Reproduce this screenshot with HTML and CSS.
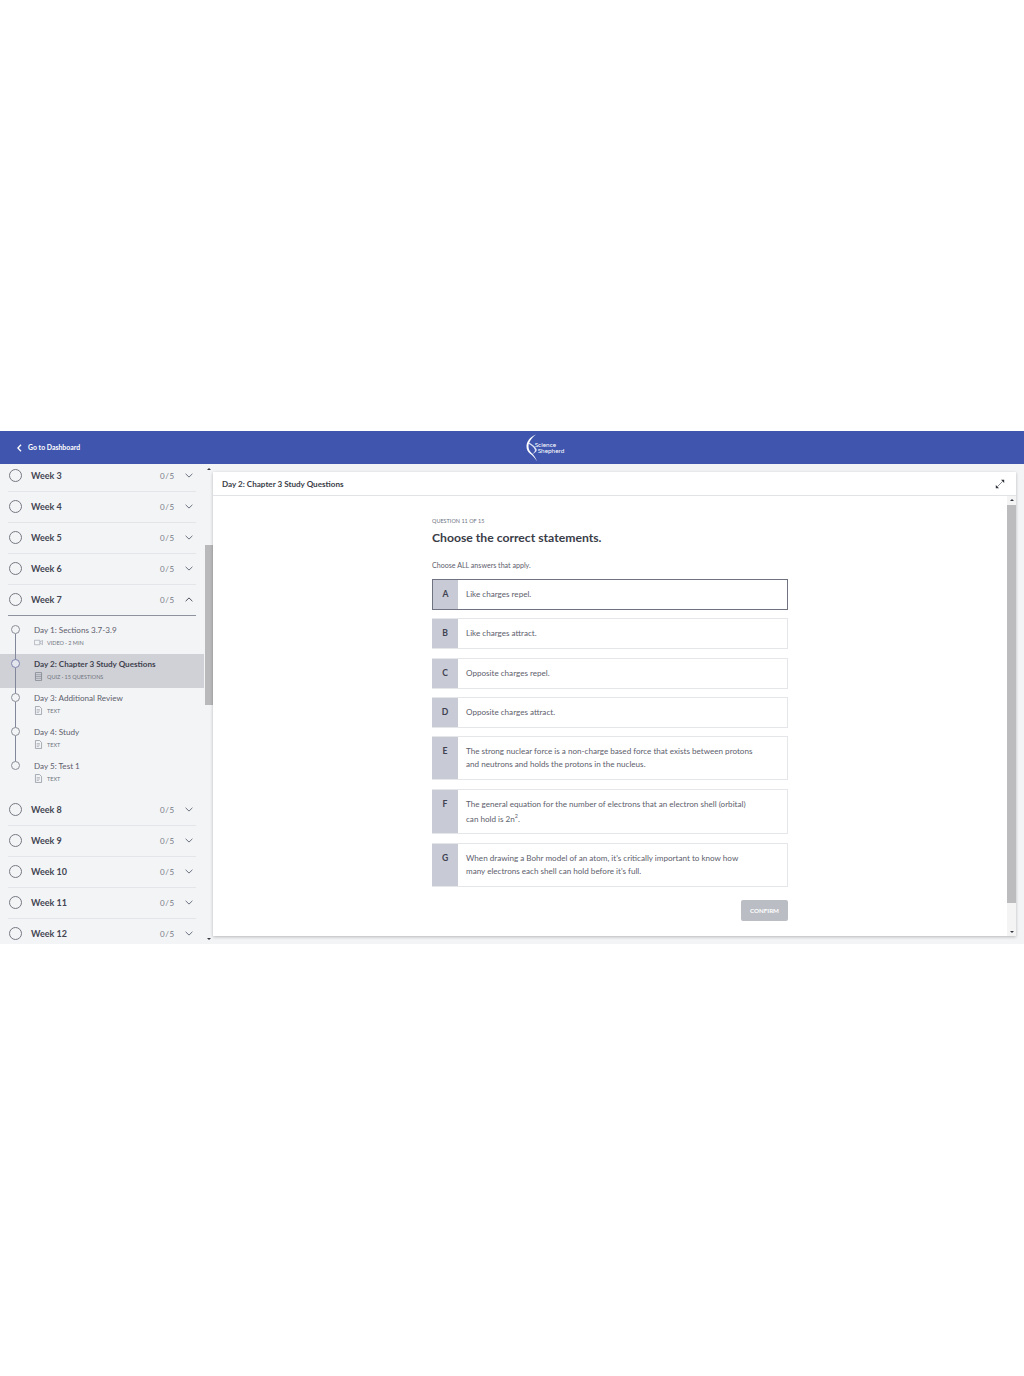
FILE: index.html
```html
<!DOCTYPE html>
<html lang="en">
<head>
  <meta charset="UTF-8">
  <meta name="viewport" content="width=device-width, initial-scale=1.0">
  <title>Day 2: Chapter 3 Study Questions</title>
  <link rel="stylesheet" href="styles.css">
</head>
<body>
  <svg class="icon-defs" width="0" height="0">
    <symbol id="chevron-down" viewBox="0 0 8 5"><path d="M.6.8 4 4.100 7.400.8" fill="none" stroke="#6b7080" stroke-width="1"/></symbol>
    <symbol id="chevron-up" viewBox="0 0 8 5"><path d="M.6 4.200 4 .9l3.400 3.300" fill="none" stroke="#4a4e5c" stroke-width="1"/></symbol>
    <symbol id="doc" viewBox="0 0 8 10"><path d="M.6.6h4.600l2.200 2.200v6.600H.6z" fill="none" stroke="#8b8f9c" stroke-width=".8"/><path d="M2 4h3.600M2 5.600h3.600M2 7.200h2.400" stroke="#8b8f9c" stroke-width=".6"/></symbol>
    <symbol id="quiz" viewBox="0 0 8 10"><path d="M.6.6h6.800v8.800H.6z" fill="none" stroke="#7b7f8c" stroke-width=".8"/><path d="M.6 3h6.800M.6 5h6.800M.6 7h6.800" stroke="#7b7f8c" stroke-width=".6"/></symbol>
    <symbol id="video" viewBox="0 0 10 7"><path d="M.5 1h6v5h-6zM6.500 3 9.500 1.200v4.600L6.500 4" fill="none" stroke="#a3a7b2" stroke-width=".8"/></symbol>
  </svg>

  <div class="app">
    <header class="topbar">
      <a class="back-link" href="#">
        <svg class="back-icon" viewBox="0 0 5 8"><path d="M4 .8.9 4 4 7.200" fill="none" stroke="#fff" stroke-width="1.300"/></svg>
        Go to Dashboard
      </a>
      <div class="logo">
        <svg class="logo-mark" viewBox="0 0 12 28">
          <path d="M10 .5C4 3 .5 7.500.5 12.500c0 3 1.500 5.500 4 7.500 2 1.600 4.500 4 6.500 7.500-1.200-4-3.500-6.500-5.500-8.500-2-2-3-4-3-6.500C2.500 8 5.500 4 10 .5z" fill="#fff"/>
          <path d="M3 8.500c2.500 1.500 6 3.500 7.500 6.500.8 1.800-.5 3.500-5 5.500 2.500-2 4-3.200 3.300-5-.9-2.300-3.800-4.500-5.800-5.500z" fill="#dfe3f4"/>
        </svg>
        <div class="logo-text">
          <span>Science</span>
          <span class="logo-indent">Shepherd</span>
        </div>
      </div>
    </header>

    <div class="columns">
      <aside class="sidebar">
        <div class="week-list">
          <div class="week"><span class="week-ring"></span><span class="week-name">Week 3</span><span class="week-count">0/5</span><svg class="week-chevron"><use href="#chevron-down"/></svg></div>
          <div class="week"><span class="week-ring"></span><span class="week-name">Week 4</span><span class="week-count">0/5</span><svg class="week-chevron"><use href="#chevron-down"/></svg></div>
          <div class="week"><span class="week-ring"></span><span class="week-name">Week 5</span><span class="week-count">0/5</span><svg class="week-chevron"><use href="#chevron-down"/></svg></div>
          <div class="week"><span class="week-ring"></span><span class="week-name">Week 6</span><span class="week-count">0/5</span><svg class="week-chevron"><use href="#chevron-down"/></svg></div>
          <div class="week open"><span class="week-ring"></span><span class="week-name">Week 7</span><span class="week-count">0/5</span><svg class="week-chevron"><use href="#chevron-up"/></svg></div>

          <div class="days">
            <div class="day">
              <span class="day-dot"></span>
              <div class="day-title">Day 1: Sections 3.7-3.9</div>
              <div class="day-meta"><svg class="meta-icon"><use href="#video"/></svg>Video · 2 min</div>
            </div>
            <div class="day active">
              <span class="day-dot"></span>
              <div class="day-title">Day 2: Chapter 3 Study Questions</div>
              <div class="day-meta"><svg class="meta-icon"><use href="#quiz"/></svg>Quiz · 15 questions</div>
            </div>
            <div class="day">
              <span class="day-dot"></span>
              <div class="day-title">Day 3: Additional Review</div>
              <div class="day-meta"><svg class="meta-icon"><use href="#doc"/></svg>Text</div>
            </div>
            <div class="day">
              <span class="day-dot"></span>
              <div class="day-title">Day 4: Study</div>
              <div class="day-meta"><svg class="meta-icon"><use href="#doc"/></svg>Text</div>
            </div>
            <div class="day last">
              <span class="day-dot"></span>
              <div class="day-title">Day 5: Test 1</div>
              <div class="day-meta"><svg class="meta-icon"><use href="#doc"/></svg>Text</div>
            </div>
          </div>

          <div class="week"><span class="week-ring"></span><span class="week-name">Week 8</span><span class="week-count">0/5</span><svg class="week-chevron"><use href="#chevron-down"/></svg></div>
          <div class="week"><span class="week-ring"></span><span class="week-name">Week 9</span><span class="week-count">0/5</span><svg class="week-chevron"><use href="#chevron-down"/></svg></div>
          <div class="week"><span class="week-ring"></span><span class="week-name">Week 10</span><span class="week-count">0/5</span><svg class="week-chevron"><use href="#chevron-down"/></svg></div>
          <div class="week"><span class="week-ring"></span><span class="week-name">Week 11</span><span class="week-count">0/5</span><svg class="week-chevron"><use href="#chevron-down"/></svg></div>
          <div class="week"><span class="week-ring"></span><span class="week-name">Week 12</span><span class="week-count">0/5</span><svg class="week-chevron"><use href="#chevron-down"/></svg></div>
        </div>
        <div class="scrollbar side-scroll">
          <span class="arrow-up"></span>
          <span class="thumb"></span>
          <span class="arrow-down"></span>
        </div>
      </aside>

      <main class="main">
        <div class="card">
          <div class="card-head">
            <span class="card-title">Day 2: Chapter 3 Study Questions</span>
            <svg class="expand-icon" viewBox="0 0 10 10">
              <path d="M2.500 7.500 7.500 2.500" stroke="#6b6e78" stroke-width=".8"/>
              <path d="M6 .8h3.200V4zM.8 6v3.200H4z" fill="#2f323a"/>
            </svg>
          </div>
          <div class="card-body">
            <div class="quiz-wrap">
              <section class="quiz">
                <p class="question-no">Question 11 of 15</p>
                <h1 class="question">Choose the correct statements.</h1>
                <p class="hint">Choose ALL answers that apply.</p>

                <div class="answer selected"><span class="letter">A</span><span class="answer-text">Like charges repel.</span></div>
                <div class="answer"><span class="letter">B</span><span class="answer-text">Like charges attract.</span></div>
                <div class="answer"><span class="letter">C</span><span class="answer-text">Opposite charges repel.</span></div>
                <div class="answer"><span class="letter">D</span><span class="answer-text">Opposite charges attract.</span></div>
                <div class="answer tall"><span class="letter">E</span><span class="answer-text">The strong nuclear force is a non-charge based force that exists between protons<br>and neutrons and holds the protons in the nucleus.</span></div>
                <div class="answer tall with-sup"><span class="letter">F</span><span class="answer-text">The general equation for the number of electrons that an electron shell (orbital)<br>can hold is 2n<sup>2</sup>.</span></div>
                <div class="answer tall"><span class="letter">G</span><span class="answer-text">When drawing a Bohr model of an atom, it's critically important to know how<br>many electrons each shell can hold before it's full.</span></div>

                <div class="actions"><button class="confirm" disabled>Confirm</button></div>
              </section>
            </div>
            <div class="scrollbar body-scroll">
              <span class="arrow-up"></span>
              <span class="thumb"></span>
              <span class="arrow-down"></span>
            </div>
          </div>
        </div>
      </main>
    </div>
  </div>
</body>
</html>
```

FILE: styles.css
```css
* {
  margin: 0;
  padding: 0;
  box-sizing: border-box;
}

body {
  font-family: Lato, 'Noto Sans', sans-serif;
  background: #ffffff;
  color: #3a3d48;
}

.icon-defs {
  display: block;
  height: 0;
}

.app {
  margin-top: 431px;
  height: 513px;
  display: flex;
  flex-direction: column;
  background: #f3f4f6;
}

/* top bar */
.topbar {
  height: 33px;
  flex: none;
  background: #4056ae;
  position: relative;
  display: flex;
  align-items: center;
  justify-content: center;
}

.back-link {
  position: absolute;
  left: 17px;
  top: 11px;
  display: flex;
  align-items: center;
  gap: 6px;
  color: #ffffff;
  font-size: 6.900px;
  font-weight: 700;
  line-height: 11px;
  text-decoration: none;
}

.back-icon {
  width: 5px;
  height: 8px;
}

.logo {
  display: flex;
  align-items: center;
  margin-left: 66px;
  color: #ffffff;
}

.logo-mark {
  width: 12px;
  height: 28px;
}

.logo-text {
  display: flex;
  flex-direction: column;
  margin-left: -3px;
  margin-top: 1px;
  font-size: 6.400px;
  line-height: 6px;
}

.logo-indent {
  margin-left: 3px;
}

.columns {
  flex: 1;
  display: flex;
  min-height: 0;
}

/* left column */
.sidebar {
  width: 213px;
  flex: none;
  display: flex;
  overflow: hidden;
}

.week-list {
  width: 205px;
  flex: none;
  margin-top: -3px;
}

.week {
  height: 31px;
  margin: 0 9px 0 8px;
  display: flex;
  align-items: center;
  border-bottom: 1.500px solid #e4e5e9;
  padding-bottom: 1px;
}

.week.open {
  border-bottom-color: #8e929e;
}

.week-ring {
  width: 13px;
  height: 13px;
  margin-left: 1px;
  border: 1.300px solid #757882;
  border-radius: 50%;
}

.week-name {
  margin-left: 9px;
  font-size: 9px;
  font-weight: 700;
  color: #434652;
}

.week-count {
  margin-left: auto;
  width: 25px;
  font-size: 8px;
  letter-spacing: 0.6px;
  color: #777b87;
}

.week-chevron {
  width: 8px;
  height: 5px;
  margin-right: 3px;
}

.days {
  padding: 4px 0 5px;
}

.day {
  height: 34px;
  width: 204px;
  padding: 4px 0 0 34px;
  position: relative;
}

.day.active {
  background: #d0d1d6;
}

/* the thread between the lesson dots */
.day::before {
  content: "";
  position: absolute;
  left: 14.500px;
  top: 14px;
  height: 29px;
  width: 1.300px;
  background: #83879a;
  z-index: 1;
}

.day.last::before {
  display: none;
}

.day-dot {
  position: absolute;
  left: 10.500px;
  top: 5px;
  width: 9px;
  height: 9px;
  border: 1px solid #8b8e98;
  border-radius: 50%;
  background: #f3f4f6;
  z-index: 2;
}

.day.active .day-dot {
  border-color: #7d84ad;
  background: #e4e6ee;
}

.day-title {
  font-size: 8.100px;
  line-height: 12px;
  color: #5d606c;
}

.day.active .day-title {
  font-weight: 700;
  color: #3f4250;
}

.day-meta {
  display: flex;
  align-items: center;
  font-size: 5.500px;
  line-height: 10px;
  text-transform: uppercase;
  color: #70747f;
  margin-top: 1.500px;
}

.meta-icon {
  width: 9px;
  height: 9px;
  margin-right: 4px;
  flex: none;
}

/* scrollbars */
.scrollbar {
  width: 8px;
  flex: none;
  display: flex;
  flex-direction: column;
  align-items: center;
}

.thumb {
  display: block;
  width: 100%;
  background: #b9b9bb;
}

.arrow-up,
.arrow-down {
  display: block;
  width: 0;
  height: 0;
  border-left: 2px solid transparent;
  border-right: 2px solid transparent;
}

.arrow-up {
  border-bottom: 2px solid #33363f;
}

.arrow-down {
  border-top: 2px solid #33363f;
  margin-top: auto;
}

.side-scroll {
  padding: 4px 0;
}

.side-scroll .thumb {
  height: 160px;
  margin-top: 75px;
}

.body-scroll {
  width: 9px;
  background: #f4f4f5;
  padding: 3px 0;
}

.body-scroll .thumb {
  height: 398px;
  margin-top: 4px;
  background: #bcbcbe;
}

/* main column */
.main {
  flex: 1;
  min-width: 0;
  padding: 8px 8px 8px 0;
}

.card {
  height: 100%;
  background: #ffffff;
  display: flex;
  flex-direction: column;
  box-shadow: 0 1px 3px rgba(0, 0, 0, 0.25);
}

.card-head {
  height: 24px;
  flex: none;
  padding: 0 11px 0 9px;
  display: flex;
  align-items: center;
  justify-content: space-between;
  border-bottom: 1px solid #e2e3e7;
}

.card-title {
  font-size: 8.100px;
  font-weight: 700;
  color: #3a3d48;
}

.expand-icon {
  width: 10px;
  height: 10px;
}

.card-body {
  flex: 1;
  display: flex;
  min-height: 0;
}

.quiz-wrap {
  flex: 1;
  display: flex;
  justify-content: center;
}

.quiz {
  width: 356px;
  padding-top: 21px;
}

.question-no {
  font-size: 5.500px;
  line-height: 8px;
  text-transform: uppercase;
  color: #70747f;
}

.question {
  margin-top: 4px;
  font-size: 12.200px;
  font-weight: 700;
  line-height: 18px;
  color: #3a3d48;
}

.hint {
  margin-top: 14px;
  font-size: 7.100px;
  line-height: 10px;
  color: #5d606c;
}

.answer {
  display: flex;
  height: 31px;
  margin-top: 8.400px;
  background: #ffffff;
  border: 1px solid #e5e6ea;
  border-left: none;
}

.hint + .answer {
  margin-top: 8px;
}

.answer.selected {
  border: 1px solid #6f7280;
}

.answer.tall {
  height: 44px;
  margin-top: 8px;
}

.answer.tall + .answer.tall {
  margin-top: 9px;
}

.answer.with-sup {
  height: 45px;
}

.letter {
  width: 26px;
  flex: none;
  background: #c8cbd6;
  text-align: center;
  font-size: 8.600px;
  font-weight: 700;
  line-height: 29px;
  color: #3f4250;
}

.selected .letter {
  width: 25px;
}

.answer-text {
  padding: 8px 0 0 8px;
  font-size: 8.100px;
  line-height: 13px;
  color: #5d606c;
}

.with-sup .answer-text {
  padding-top: 7px;
  line-height: 15px;
}

.answer sup {
  font-size: 5.500px;
  line-height: 0;
}

.actions {
  display: flex;
  justify-content: flex-end;
  margin-top: 12.500px;
}

.confirm {
  width: 47px;
  height: 21px;
  border: none;
  border-radius: 2px;
  background: #bbbdc4;
  color: #ffffff;
  font-family: inherit;
  font-size: 6.200px;
  font-weight: 700;
  text-transform: uppercase;
}
```
